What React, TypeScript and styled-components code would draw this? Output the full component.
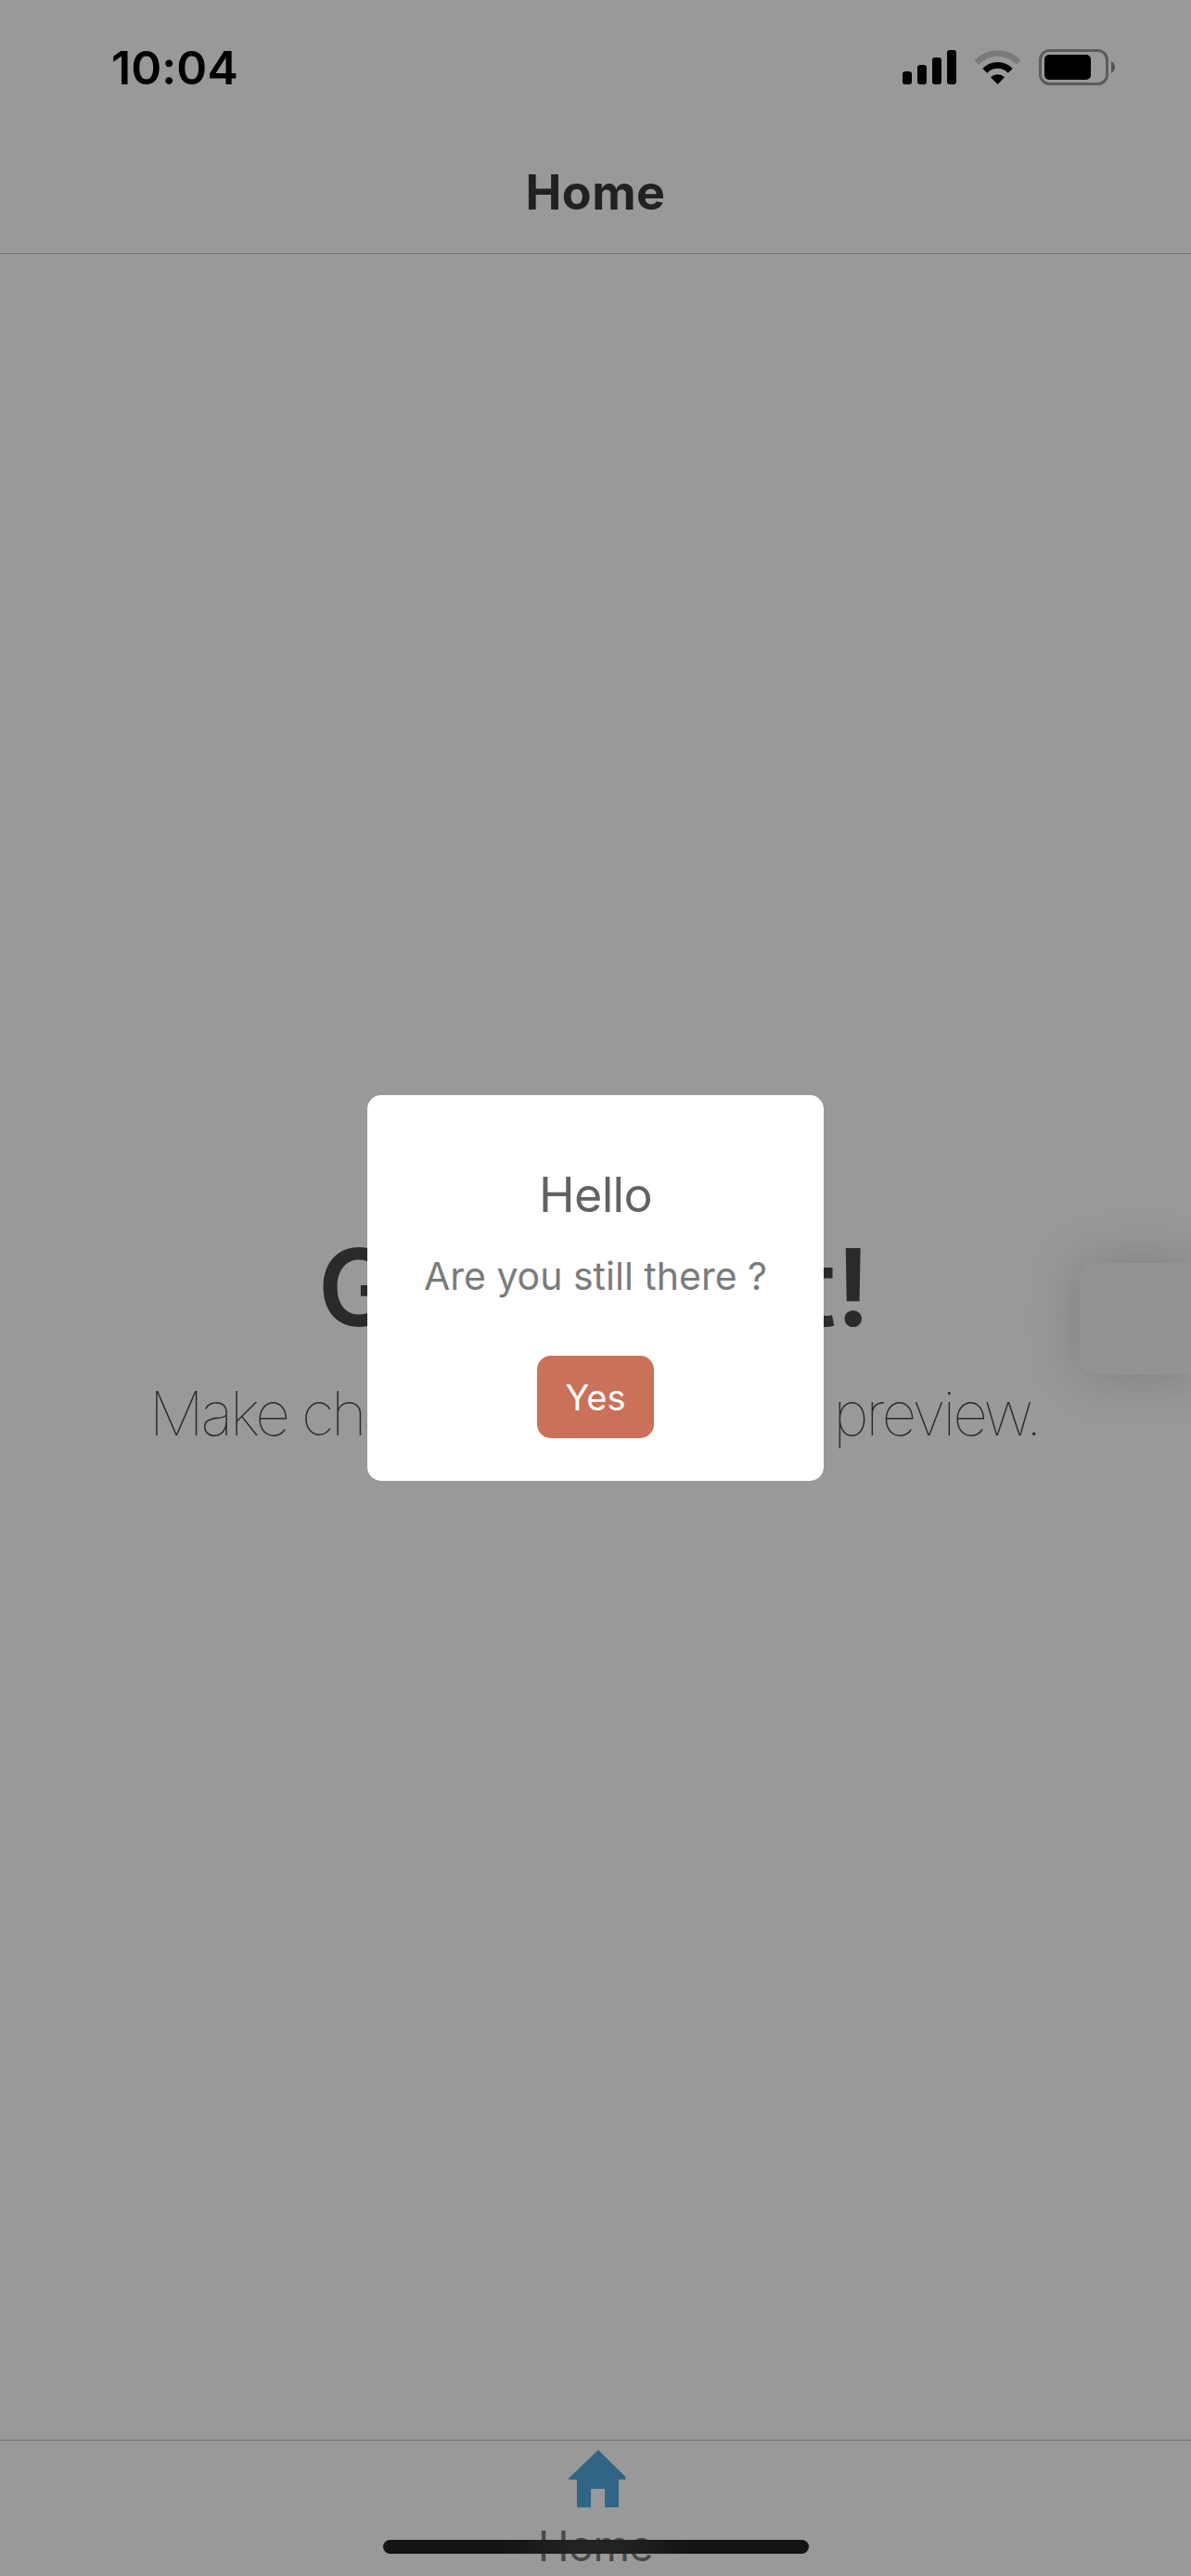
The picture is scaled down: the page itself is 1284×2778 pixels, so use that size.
import React from "react";
import styled, { createGlobalStyle } from "styled-components";

const GlobalStyle = createGlobalStyle`
  *, *::before, *::after { box-sizing: border-box; }
  body { margin: 0; background: #fff; }
`;

const Screen = styled.div`
  position: relative;
  display: flex;
  flex-direction: column;
  width: 1284px;
  height: 2778px;
  overflow: hidden;
  background: #fff;
  font-family: Inter, "Liberation Sans", sans-serif;
`;

const StatusBar = styled.div`
  display: flex;
  align-items: flex-start;
  justify-content: space-between;
  height: 141px;
  padding: 53px 82px 0 120px;
`;

const Clock = styled.time`
  font-size: 50px;
  font-weight: 600;
  line-height: 40px;
  letter-spacing: 0.1px;
  color: #000;
`;

const StatusIcons = styled.div`
  display: flex;
  align-items: flex-start;
  svg { display: block; }
`;

const Signal = styled.svg`
  margin: 1px 19px 0 0;
`;

const Wifi = styled.svg`
  margin: 1px 19px 0 0;
`;

const NavBar = styled.header`
  display: flex;
  align-items: center;
  justify-content: center;
  height: 133px;
  padding-top: 2px;
  border-bottom: 1px solid #bcbcbc;
`;

const NavTitle = styled.h1`
  margin: 0;
  font-size: 52px;
  font-weight: 700;
  line-height: 60px;
  letter-spacing: 0.4px;
  color: #373737;
`;

const Main = styled.main`
  display: flex;
  flex: 1;
  flex-direction: column;
  align-items: center;
  padding-top: 1046px;
  white-space: nowrap;
  color: #464646;
`;

const Headline = styled.h2`
  margin: 0 3px 0 0;
  font-size: 115px;
  font-weight: 600;
  line-height: 138px;
  letter-spacing: 0;
  word-spacing: -34px;
`;

const Subline = styled.p`
  margin: 0 3px 0 0;
  font-size: 66px;
  font-weight: 120;
  line-height: 132px;
  letter-spacing: -3.3px;
`;

const TabBar = styled.nav`
  display: flex;
  justify-content: center;
  height: 147px;
  border-top: 1px solid #bcbcbc;
`;

const Tab = styled.a`
  display: flex;
  flex-direction: column;
  align-items: center;
  padding: 10px 0 0 2px;
  svg { display: block; }
`;

const TabLabel = styled.span`
  margin: 12px 2px 0 0;
  font-size: 45px;
  font-weight: 400;
  line-height: 60px;
  letter-spacing: -0.5px;
  color: #7b7b7b;
`;

const SideHandle = styled.div`
  position: absolute;
  top: 1362px;
  left: 1164px;
  width: 132px;
  height: 120px;
  border-radius: 15px;
  background: #f5f5f5;
  box-shadow: 0 0 60px rgba(0, 0, 0, 0.2);
`;

const Backdrop = styled.div`
  position: absolute;
  inset: 0;
  display: flex;
  align-items: center;
  justify-content: center;
  background: rgba(0, 0, 0, 0.4);
`;

const Dialog = styled.section`
  display: flex;
  flex-direction: column;
  align-items: center;
  width: 492px;
  height: 416px;
  padding-top: 73px;
  border-radius: 15px;
  background: #fff;
`;

const DialogTitle = styled.h3`
  margin: 0;
  font-size: 52px;
  font-weight: 400;
  line-height: 70px;
  letter-spacing: -0.7px;
  color: #626262;
`;

const DialogText = styled.p`
  margin: 22px 0 56px;
  font-size: 41px;
  font-weight: 400;
  line-height: 60px;
  white-space: nowrap;
  color: #7b7b7b;
`;

const DialogButton = styled.button`
  width: 126px;
  height: 89px;
  padding: 1px 0 0;
  border: 0;
  border-radius: 15px;
  background: #cb7059;
  font: 400 38px/88px Inter, "Liberation Sans", sans-serif;
  color: #fff;
`;

const HomeIndicator = styled.div`
  position: absolute;
  left: 413px;
  bottom: 24px;
  width: 459px;
  height: 15px;
  border-radius: 8px;
  background: linear-gradient(90deg, #141414 28%, #222 44%, #222 56%, #141414 72%);
`;

const signalTops = [23, 16, 8, 0];

export default function App() {
  return (
    <Screen>
      <GlobalStyle />
      <StatusBar>
        <Clock>10:04</Clock>
        <StatusIcons>
          <Signal width="58" height="37" viewBox="0 0 58 37">
            {signalTops.map((y, i) => (
              <rect key={y} x={i * 16} y={y} width="10" height={37 - y} rx="3" />
            ))}
          </Signal>
          <Wifi width="51" height="38" viewBox="0 0 51 38">
            <path d="M.4 11.2A34 34 0 0 1 50.6 11.2L45.7 15.8A27 27 0 0 0 5.3 15.8Z" fill="#cbcbcb" />
            <path d="M9.3 20A22 22 0 0 1 41.7 20L36.7 24.8A15 15 0 0 0 14.3 24.8Z" />
            <path d="M18 29.2A11 11 0 0 1 33 29.2L25.5 37Z" />
          </Wifi>
          <svg width="82" height="39" viewBox="0 0 82 39">
            <rect x="1.5" y="1.5" width="72" height="36" rx="10" fill="none" stroke="#999" strokeWidth="3" />
            <rect x="6" y="6" width="50" height="27" rx="5" />
            <path d="M78 13.2C80.7 14.4 82 16.8 82 19.4S80.7 24.6 78 25.8Z" fill="#8a8a8a" />
          </svg>
        </StatusIcons>
      </StatusBar>

      <NavBar>
        <NavTitle>Home</NavTitle>
      </NavBar>

      <Main>
        <Headline>Great start!</Headline>
        <Subline>Make changes to see a live preview.</Subline>
      </Main>

      <TabBar>
        <Tab>
          <svg width="63" height="62" viewBox="0 0 63 62">
            <path
              d="M33 0L62.3 29V32H55V61.2Q55 62 54.2 62H40V42H25V62H10.8Q10 62 10 61.2V32H1Q.2 31.6 1 30.8Z"
              fill="#53a8df"
            />
          </svg>
          <TabLabel>Home</TabLabel>
        </Tab>
      </TabBar>

      <SideHandle />

      <Backdrop>
        <Dialog role="dialog">
          <DialogTitle>Hello</DialogTitle>
          <DialogText>Are you still there ?</DialogText>
          <DialogButton>Yes</DialogButton>
        </Dialog>
      </Backdrop>

      <HomeIndicator />
    </Screen>
  );
}
